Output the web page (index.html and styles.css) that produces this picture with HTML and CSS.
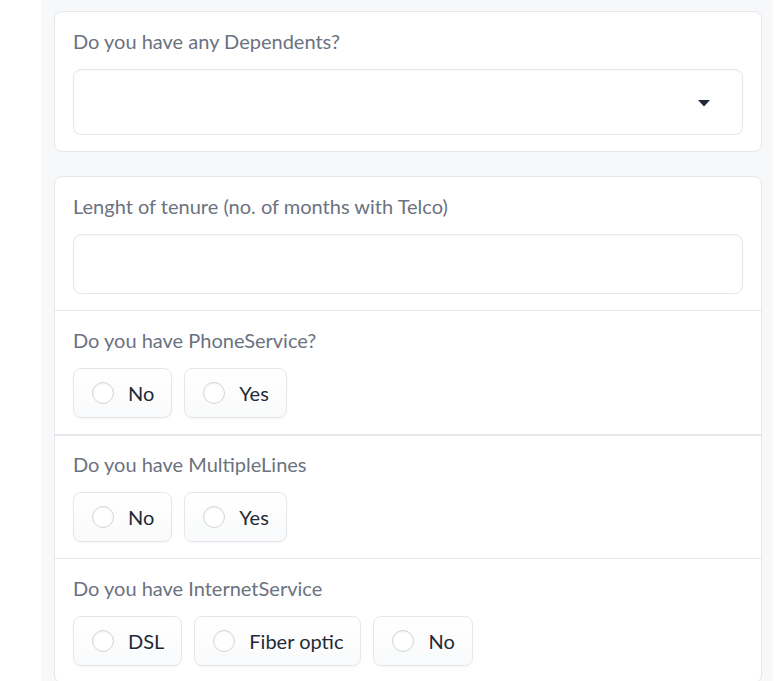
FILE: index.html
```html
<!DOCTYPE html>
<html lang="en">
<head>
<meta charset="utf-8">
<title>Form</title>
<link rel="stylesheet" href="styles.css">
</head>
<body>
<div class="column">
  <div class="card">
    <div class="field">
      <div class="label">Do you have any Dependents?</div>
      <div class="dropdown">
        <svg class="caret" width="12" height="7" viewBox="0 0 12 7"><path d="M0 0 H12 L6 6.5 Z" fill="#1f2937"/></svg>
      </div>
    </div>
  </div>
  <div class="card">
    <div class="field">
      <div class="label">Lenght of tenure (no. of months with Telco)</div>
      <div class="textbox"></div>
    </div>
    <div class="field sep">
      <div class="label">Do you have PhoneService?</div>
      <div class="radios">
        <div class="radio"><span class="dot"></span><span class="rtext">No</span></div>
        <div class="radio"><span class="dot"></span><span class="rtext">Yes</span></div>
      </div>
    </div>
    <div class="field sep thick">
      <div class="label">Do you have MultipleLines</div>
      <div class="radios">
        <div class="radio"><span class="dot"></span><span class="rtext">No</span></div>
        <div class="radio"><span class="dot"></span><span class="rtext">Yes</span></div>
      </div>
    </div>
    <div class="field sep">
      <div class="label">Do you have InternetService</div>
      <div class="radios">
        <div class="radio"><span class="dot"></span><span class="rtext">DSL</span></div>
        <div class="radio"><span class="dot"></span><span class="rtext">Fiber optic</span></div>
        <div class="radio"><span class="dot"></span><span class="rtext">No</span></div>
      </div>
    </div>
  </div>
</div>
</body>
</html>
```

FILE: styles.css
```css
html, body {
  margin: 0;
  padding: 0;
  background: #ffffff;
  font-family: "Lato", "Noto Sans", sans-serif;
}
.column {
  margin-left: 41px;
  width: 732px;
  min-height: 100vh;
  background: #f7f8fa;
  box-sizing: border-box;
  padding: 11px 11px 0 13px;
  display: flex;
  flex-direction: column;
  gap: 24px;
}
.card {
  background: #ffffff;
  border: 1px solid #e5e7eb;
  border-radius: 8px;
  display: flex;
  flex-direction: column;
}
.field {
  padding: 16px 18px 16px 18px;
  display: flex;
  flex-direction: column;
  gap: 15px;
}
.field.sep {
  border-top: 1px solid #e5e7eb;
}
.field.thick {
  border-top: 2px solid #e5e7eb;
  padding-top: 15px;
}
.label {
  font-size: 20px;
  line-height: 26px;
  color: #6b7280;
}
.dropdown {
  height: 64px;
  border: 1px solid #e5e7eb;
  border-radius: 8px;
  background: #ffffff;
  box-shadow: inset 0 1px 2px rgba(0,0,0,0.04);
  display: flex;
  align-items: center;
  justify-content: flex-end;
  padding-right: 32px;
}
.caret {
  margin-top: 2px;
}
.textbox {
  height: 58px;
  border: 1px solid #e5e7eb;
  border-radius: 8px;
  background: #ffffff;
  box-shadow: inset 0 1px 2px rgba(0,0,0,0.04);
}
.radios {
  display: flex;
  gap: 12px;
}
.radio {
  height: 48px;
  border: 1px solid #e5e7eb;
  border-radius: 8px;
  background: linear-gradient(#ffffff, #f9fafb);
  box-shadow: 0 1px 2px rgba(0,0,0,0.04);
  display: flex;
  align-items: center;
  padding: 0 17px 0 18px;
  gap: 14px;
}
.dot {
  width: 20px;
  height: 20px;
  border: 1px solid #d1d5db;
  border-radius: 50%;
  background: #ffffff;
  box-shadow: inset 0 1px 2px rgba(0,0,0,0.05);
}
.rtext {
  font-size: 20px;
  color: #1f2937;
}
```
